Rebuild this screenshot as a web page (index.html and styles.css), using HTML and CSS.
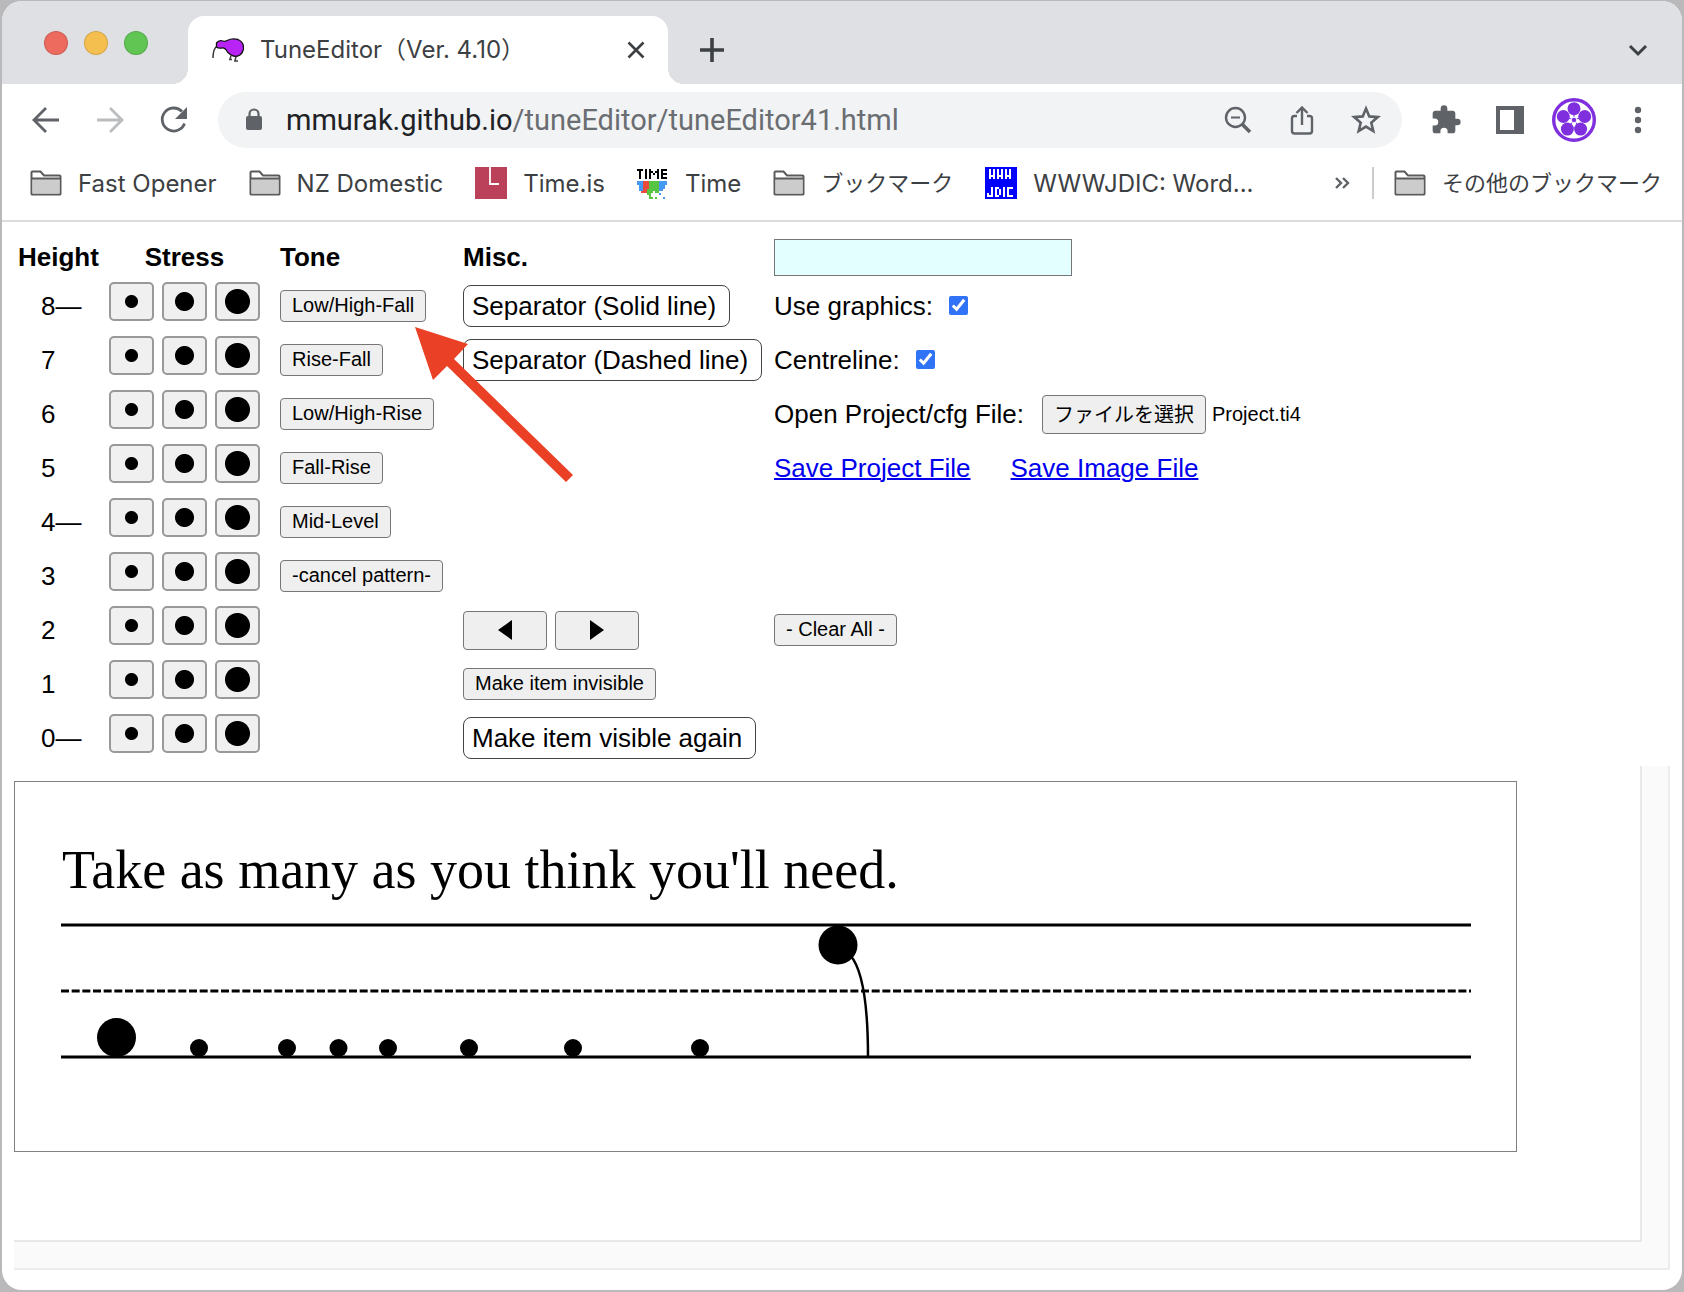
FILE: index.html
```html
<!DOCTYPE html>
<html lang="ja">
<head>
<meta charset="utf-8">
<title>TuneEditor（Ver. 4.10）</title>
<link rel="stylesheet" href="styles.css">
</head>
<body>
<svg width="0" height="0" class="defs" aria-hidden="true">
  <symbol id="folder" viewBox="0 0 32 26"><path d="M1.500 24V2.500Q1.500 1.500 2.500 1.500H10.500L14 5.500H29.500Q30.500 5.500 30.500 6.500V24Q30.500 24.500 29.500 24.500H2.500Q1.500 24.500 1.500 24Z" fill="#fff" stroke="#5a5a5a" stroke-width="2"/><path d="M2.500 9H29.500V23.500H2.500Z" fill="#ccc"/><path d="M2 8.500H30" stroke="#5a5a5a" stroke-width="2"/></symbol>
</svg>
<div class="window">
  <header class="tabstrip">
    <div class="lights"><span class="red"></span><span class="yellow"></span><span class="green"></span></div>
    <div class="tab">
      <svg class="favicon" width="32" height="24" viewBox="0 0 32 24"><path d="M1 20Q1 11 5 8" fill="none" stroke="#333" stroke-width="1.500"/><path d="M4.500 9V5Q7 1.500 11 3Q13 4 15 2.500Q20 0 26 1.500Q32 4 31.500 11Q30 17.500 24 18.500Q19 18 15.500 14Q13 9.500 10 10Q6 10.500 4.500 9Z" fill="#b824f5" stroke="#111" stroke-width="1.300"/><path d="M19 17.500 18 21.500M24 18.500 23 23M17 21.500H20M22 23H26" fill="none" stroke="#444" stroke-width="1.500"/></svg>
      <span class="tab-title">TuneEditor（Ver. 4.10）</span>
      <button class="icon" aria-label="Close tab"><svg width="24" height="24" viewBox="0 0 24 24"><path d="M4.500 4.500 19.500 19.500M19.500 4.500 4.500 19.500" stroke="#3c4043" stroke-width="2.600"/></svg></button>
    </div>
    <button class="icon new-tab" aria-label="New tab"><svg width="24" height="24" viewBox="0 0 24 24"><path d="M12 0V24M0 12H24" stroke="#3c4043" stroke-width="3.600"/></svg></button>
    <button class="icon tab-list" aria-label="Search tabs"><svg width="24" height="24" viewBox="0 0 24 24"><path d="M4 8 12 16 20 8" fill="none" stroke="#3c4043" stroke-width="3"/></svg></button>
  </header>
  <nav class="toolbar">
    <div class="nav-buttons">
      <button class="icon" aria-label="Back"><svg width="32" height="32" viewBox="0 0 32 32"><path d="M29 16H5M16 4 4 16 16 28" fill="none" stroke="#5f6368" stroke-width="2.800"/></svg></button>
      <button class="icon" aria-label="Forward"><svg width="32" height="32" viewBox="0 0 32 32"><path d="M3 16H27M16 4 28 16 16 28" fill="none" stroke="#babcbe" stroke-width="2.800"/></svg></button>
      <button class="icon" aria-label="Reload"><svg width="32" height="32" viewBox="0 0 32 32"><path d="M26.500 19.500A11.500 11.500 0 1 1 24 7.500" fill="none" stroke="#5f6368" stroke-width="2.800"/><path d="M29 3V15H17Z" fill="#5f6368"/></svg></button>
    </div>
    <div class="omnibox">
      <svg width="20" height="24" viewBox="0 0 20 24"><path d="M5.500 9V6A4.500 4.500 0 0 1 14.500 6V9" fill="none" stroke="#5f6368" stroke-width="2.200"/><rect x="2" y="8" width="16" height="14" rx="2" fill="#5f6368"/></svg>
      <div class="url"><span class="host">mmurak.github.io</span>/tuneEditor/tuneEditor41.html</div>
      <button class="icon" aria-label="Zoom"><svg width="32" height="32" viewBox="0 0 32 32"><circle cx="13.500" cy="13.500" r="9.500" fill="none" stroke="#5f6368" stroke-width="2.400"/><path d="M20.500 20.500 28 28" stroke="#5f6368" stroke-width="3.600"/><path d="M9 13.500H18" stroke="#5f6368" stroke-width="2"/></svg></button>
      <button class="icon" aria-label="Share"><svg width="32" height="32" viewBox="0 0 32 32"><path d="M11 12H8.500Q6 12 6 14.500V27Q6 29.500 8.500 29.500H23.500Q26 29.500 26 27V14.500Q26 12 23.500 12H21M16 21V5M10.500 9 16 3.500 21.500 9" fill="none" stroke="#5f6368" stroke-width="2.400"/></svg></button>
      <button class="icon" aria-label="Bookmark"><svg width="32" height="32" viewBox="0 0 32 32"><path d="M16 4.500 19.300 12.400 27.800 13.100 21.300 18.700 23.300 27.100 16 22.600 8.700 27.100 10.700 18.700 4.200 13.100 12.700 12.400Z" fill="none" stroke="#5f6368" stroke-width="2.600"/></svg></button>
    </div>
    <div class="actions">
      <button class="icon" aria-label="Extensions"><svg width="32" height="32" viewBox="0 0 24 24"><path d="M20.500 11H19V7c0-1.100-.9-2-2-2h-4V3.500a2.500 2.500 0 0 0-5 0V5H4c-1.100 0-2 .9-2 2v3.800h1.500a2.700 2.700 0 0 1 0 5.400H2V20c0 1.100.9 2 2 2h3.800v-1.500a2.700 2.700 0 0 1 5.400 0V22H17c1.100 0 2-.9 2-2v-4h1.500a2.500 2.500 0 0 0 0-5z" fill="#5f6368"/></svg></button>
      <button class="icon" aria-label="Side panel"><svg width="32" height="32" viewBox="0 0 32 32"><path d="M2 2H30V30H2ZM6 6V26H20V6Z" fill="#5f6368" fill-rule="evenodd"/></svg></button>
      <button class="icon" aria-label="Profile"><svg class="avatar" width="44" height="44" viewBox="-22 -22 44 44"><circle r="20.300" fill="#fff" stroke="#7f2fdd" stroke-width="3.400"/><g fill="#7f2fdd"><circle cy="-11.300" r="6.500"/><circle cx="10.700" cy="-3.500" r="6.500"/><circle cx="6.600" cy="9.100" r="6.500"/><circle cx="-6.600" cy="9.100" r="6.500"/><circle cx="-10.700" cy="-3.500" r="6.500"/></g><path d="M0 0V-6M0 0 5.500-2M0 0 3.500 5M0 0-3.500 5M0 0-5.500-2" stroke="#7f2fdd"/><circle r="2.800" fill="#7f2fdd" stroke="#fff"/></svg></button>
      <button class="icon" aria-label="Menu"><svg width="32" height="32" viewBox="0 0 32 32" fill="#5f6368"><circle cx="16" cy="6" r="3.200"/><circle cx="16" cy="16" r="3.200"/><circle cx="16" cy="26" r="3.200"/></svg></button>
    </div>
  </nav>
  <nav class="bookmarks">
    <a href="#"><svg width="32" height="26"><use href="#folder"/></svg>Fast Opener</a>
    <a href="#"><svg width="32" height="26"><use href="#folder"/></svg>NZ Domestic</a>
    <a href="#"><svg width="32" height="32" viewBox="0 0 32 32"><path d="M0 0H32V32H0Z" fill="#bb4059"/><path d="M15 0V17H24" fill="none" stroke="#fff" stroke-width="1.800"/></svg>Time.is</a>
    <a href="#"><svg width="32" height="32" viewBox="0 0 16 16" shape-rendering="crispEdges"><path d="M0 1h3v1H2v4H1V2H0zM4 1h1v5H4zM6 1h1v1h1v1h1V2h1V1h1v5h-1V3H9v1H8V3H7v3H6zM12 1h3v1h-2v1h2v1h-2v1h2v1h-3z"/><path d="M0 7h15v2h-1v2h-1v1h-2V7H3v6H2v-1H1V9H0z" fill="#4698f5"/><path d="M3 7h3v6H3zM2 12h2v1H2z" fill="#ea4a3d"/><path d="M6 7h5v6H9v-1H8v1H7v2h1v1H6v-2H5v-3h1zM9 15h1v1H9z" fill="#58c443"/><path d="M11 13h1v1h-1zM13 15h1v1h-1z" fill="#4698f5"/></svg>Time</a>
    <a href="#" class="jp"><svg width="32" height="26"><use href="#folder"/></svg>ブックマーク</a>
    <a href="#"><svg width="32" height="32" viewBox="0 0 16 16" shape-rendering="crispEdges"><path d="M0 0H16V16H0Z" fill="#00f"/><path d="M2 1h1v3h1V1h1v5H4V5H3v1H2zM6 1h1v3h1V1h1v5H8V5H7v1H6zM10 1h1v3h1V1h1v5h-1V5h-1v1h-1zM3 10h1v5H1v-2h1v1h1zM5 10h2v1h1v3H7v1H5zM9 10h1v5H9zM11 10h3v1h-2v3h2v1h-3z" fill="#fff"/><path d="M6 11h1v3H6z" fill="#00f"/></svg>WWWJDIC: Word...</a>
    <button class="icon more" aria-label="More bookmarks"><svg width="16" height="14" viewBox="0 0 16 14"><path d="M2 2 7 7 2 12M9 2 14 7 9 12" fill="none" stroke="#5f6368" stroke-width="2.400"/></svg></button>
    <a href="#" class="jp other"><svg width="32" height="26"><use href="#folder"/></svg>その他のブックマーク</a>
  </nav>
  <main>
    <form class="controls">
      <strong class="first">Height</strong><strong class="center">Stress</strong><strong>Tone</strong><strong>Misc.</strong>
      <div><input type="text" class="entry" aria-label="Sentence"></div>

      <span class="level">8—</span>
      <div class="stress"><button type="button" class="s" aria-label="8 weak"></button><button type="button" class="m" aria-label="8 medium"></button><button type="button" class="l" aria-label="8 strong"></button></div>
      <div><button type="button" class="btn">Low/High-Fall</button></div>
      <div><button type="button" class="big">Separator (Solid line)</button></div>
      <div><label for="graphics">Use graphics:</label><input type="checkbox" id="graphics" checked></div>

      <span class="level">7</span>
      <div class="stress"><button type="button" class="s" aria-label="7 weak"></button><button type="button" class="m" aria-label="7 medium"></button><button type="button" class="l" aria-label="7 strong"></button></div>
      <div><button type="button" class="btn">Rise-Fall</button></div>
      <div><button type="button" class="big">Separator (Dashed line)</button></div>
      <div><label for="centreline">Centreline:</label><input type="checkbox" id="centreline" checked></div>

      <span class="level">6</span>
      <div class="stress"><button type="button" class="s" aria-label="6 weak"></button><button type="button" class="m" aria-label="6 medium"></button><button type="button" class="l" aria-label="6 strong"></button></div>
      <div><button type="button" class="btn">Low/High-Rise</button></div>
      <div></div>
      <div class="file"><label for="project">Open Project/cfg File:</label><input type="file" id="project" hidden><button type="button" class="btn tall">ファイルを選択</button><span class="file-name">Project.ti4</span></div>

      <span class="level">5</span>
      <div class="stress"><button type="button" class="s" aria-label="5 weak"></button><button type="button" class="m" aria-label="5 medium"></button><button type="button" class="l" aria-label="5 strong"></button></div>
      <div><button type="button" class="btn">Fall-Rise</button></div>
      <div></div>
      <div class="links"><a href="#">Save Project File</a><a href="#">Save Image File</a></div>

      <span class="level">4—</span>
      <div class="stress"><button type="button" class="s" aria-label="4 weak"></button><button type="button" class="m" aria-label="4 medium"></button><button type="button" class="l" aria-label="4 strong"></button></div>
      <div><button type="button" class="btn">Mid-Level</button></div>
      <div></div><div></div>

      <span class="level">3</span>
      <div class="stress"><button type="button" class="s" aria-label="3 weak"></button><button type="button" class="m" aria-label="3 medium"></button><button type="button" class="l" aria-label="3 strong"></button></div>
      <div><button type="button" class="btn">-cancel pattern-</button></div>
      <div></div><div></div>

      <span class="level">2</span>
      <div class="stress"><button type="button" class="s" aria-label="2 weak"></button><button type="button" class="m" aria-label="2 medium"></button><button type="button" class="l" aria-label="2 strong"></button></div>
      <div></div>
      <div class="steps"><button type="button" class="btn step" aria-label="Previous"><svg width="14" height="20" viewBox="0 0 14 20"><path d="M14 0V20L0 10Z"/></svg></button><button type="button" class="btn step" aria-label="Next"><svg width="14" height="20" viewBox="0 0 14 20"><path d="M0 0V20L14 10Z"/></svg></button></div>
      <div><button type="button" class="btn">- Clear All -</button></div>

      <span class="level">1</span>
      <div class="stress"><button type="button" class="s" aria-label="1 weak"></button><button type="button" class="m" aria-label="1 medium"></button><button type="button" class="l" aria-label="1 strong"></button></div>
      <div></div>
      <div><button type="button" class="btn">Make item invisible</button></div>
      <div></div>

      <span class="level">0—</span>
      <div class="stress"><button type="button" class="s" aria-label="0 weak"></button><button type="button" class="m" aria-label="0 medium"></button><button type="button" class="l" aria-label="0 strong"></button></div>
      <div></div>
      <div><button type="button" class="big">Make item visible again</button></div>
      <div></div>
    </form>
    <div class="outer">
      <div class="inner">
        <svg class="score" width="1503" height="371" viewBox="14 781 1503 371">
          <rect x="14.500" y="781.500" width="1502" height="370" fill="#fff" stroke="#808080"/>
          <text x="62" y="888" class="sentence">Take as many as you think you'll need.</text>
          <path d="M61 925H1471M61 1057H1471" stroke="#000" stroke-width="3"/>
          <path d="M61 991H1471" stroke="#000" stroke-width="3" stroke-dasharray="8 2.667"/>
          <circle cx="116.500" cy="1037.500" r="19.500"/>
          <circle cx="199" cy="1048" r="9"/><circle cx="287" cy="1048" r="9"/><circle cx="338.500" cy="1048" r="9"/><circle cx="388" cy="1048" r="9"/><circle cx="469" cy="1048" r="9"/><circle cx="573" cy="1048" r="9"/><circle cx="700" cy="1048" r="9"/>
          <circle cx="838" cy="945" r="19.500"/>
          <path d="M850 955Q868 975 868 1057" fill="none" stroke="#000" stroke-width="2.500"/>
        </svg>
      </div>
    </div>
    <svg class="pointer" width="160" height="157" viewBox="414 326 160 157"><path d="M415 327 468 344 454 359 573 475 566 482 447 366 433 380Z" fill="#ea4025"/></svg>
  </main>
</div>
</body>
</html>
```
FILE: styles.css
```css
* { box-sizing: border-box; }
body {
  margin: 0;
  padding: 1px 2px 2px;
  min-height: 100vh;
  display: flex;
  flex-direction: column;
  background: #b9b9bb;
  font-family: "Liberation Sans", "Noto Sans CJK JP", sans-serif;
  color: #000;
}
.defs { position: absolute; }
svg { display: block; flex: none; }
button { font: inherit; color: inherit; padding: 0; }
.icon { border: 0; background: none; display: flex; flex: none; }

.window {
  flex: 1;
  display: flex;
  flex-direction: column;
  border-radius: 20px;
  overflow: hidden;
  background: #fff;
}
.tabstrip {
  display: flex;
  align-items: center;
  height: 83px;
  padding-right: 32px;
  background: #dfe0e4;
  color: #3c4043;
}
.lights { display: flex; gap: 16px; width: 186px; padding-left: 42px; }
.lights span { width: 24px; height: 24px; border-radius: 50%; border: 1px solid #0002; }
.red { background: #ed6a5e; }
.yellow { background: #f5bf4f; }
.green { background: #61c554; }
.tab {
  position: relative;
  display: flex;
  align-items: center;
  align-self: flex-end;
  width: 480px;
  height: 68px;
  padding: 0 20px 0 24px;
  background: #fff;
  border-radius: 16px 16px 0 0;
}
.tab::before, .tab::after {
  content: "";
  position: absolute;
  bottom: 0;
  width: 16px;
  height: 16px;
}
.tab::before { left: -16px; background: radial-gradient(circle at 0 0, #dfe0e4 16px, #fff 16px); }
.tab::after { right: -16px; background: radial-gradient(circle at 100% 0, #dfe0e4 16px, #fff 16px); }
.tab-title { flex: 1; margin-left: 16px; font: 24px Inter, "Noto Sans CJK JP", sans-serif; line-height: 32px; }
.new-tab, .tab-list { padding-top: 14px; }
.new-tab { margin-left: 32px; }
.tab-list { margin-left: auto; }

.toolbar { display: flex; align-items: center; height: 72px; }
.nav-buttons { display: flex; gap: 32px; width: 216px; padding-left: 28px; flex: none; }
.omnibox {
  flex: 1;
  min-width: 0;
  display: flex;
  align-items: center;
  gap: 32px;
  height: 56px;
  padding: 0 20px 0 26px;
  border-radius: 28px;
  background: #f1f3f4;
}
.url { flex: 1; margin-left: -10px; font: 29px Roboto, sans-serif; color: #6a6d71; white-space: nowrap; }
.host { color: #202124; }
.actions { display: flex; align-items: center; gap: 32px; padding: 0 28px; }
.avatar { margin: 0 -6px; }

.bookmarks {
  display: flex;
  align-items: center;
  gap: 32px;
  height: 66px;
  padding: 0 20px 10px 28px;
  border-bottom: 2px solid #dcdcdd;
  font-family: Inter, "Noto Sans CJK JP", sans-serif;
  font-size: 24px;
  white-space: nowrap;
}
.bookmarks a { display: flex; align-items: center; gap: 16px; color: #3c4043; text-decoration: none; }
.bookmarks .jp { font-size: 22px; line-height: 26px; }
.more { margin-left: auto; margin-right: -10px; }
.bookmarks .other { border-left: 2px solid #ccc; padding-left: 20px; height: 32px; }

main { position: relative; flex: 1; display: flex; flex-direction: column; padding: 13px 12px 20px; }
.controls {
  display: grid;
  grid-template-columns: 95px 171px 183px 311px 1fr;
  grid-template-rows: 44px;
  grid-auto-rows: 54px;
  align-items: center;
  margin-bottom: 1px;
  font-size: 26px;
  white-space: nowrap;
}
.controls > div { display: flex; align-items: center; }
.first { padding-left: 4px; }
.center { width: 151px; text-align: center; }
.level { padding-left: 27px; }
.controls .stress { gap: 8px; padding-bottom: 10px; }
.stress button {
  width: 45px;
  height: 39px;
  border: 2px solid #999;
  border-radius: 5px;
  background: #f0f0f0;
}
.stress .s { background: radial-gradient(circle, #000 6px, #f0f0f0 7px); }
.stress .m { background: radial-gradient(circle, #000 9px, #f0f0f0 10px); }
.stress .l { background: radial-gradient(circle, #000 12px, #f0f0f0 13px); }
.btn {
  height: 32px;
  padding: 0 11px 2px;
  border: 1px solid #767676;
  border-radius: 4px;
  background: #efefef;
  font-size: 20px;
}
.tall { height: 39px; }
.step { width: 84px; height: 39px; padding: 0; display: flex; align-items: center; justify-content: center; }
.steps { gap: 8px; }
.big {
  height: 42px;
  padding: 0 13px 0 8px;
  border: 1px solid #444;
  border-radius: 8px;
  background: #fff;
}
.entry { width: 298px; height: 37px; border: 1px solid #767676; background: #e4ffff; font-size: 26px; }
input[type="checkbox"] { width: 19px; height: 19px; margin: 0 0 2px 16px; accent-color: #3173f6; }
.file label { margin-right: 18px; }
.file-name { margin-left: 6px; font-size: 20px; }
.links { gap: 40px; }
.links a { color: #0000ee; text-decoration-thickness: 2px; }

.outer {
  flex: 1;
  display: flex;
  padding: 0 26px 26px 0;
  border: solid #ececec;
  border-width: 0 2px 2px 0;
  background: #fafafa;
}
.inner { flex: 1; min-width: 0; padding: 15px 0 87px; border: solid #e8e8e8; border-width: 0 2px 2px 0; background: #fff; }
.sentence { font: 54px "Liberation Serif", serif; }
.pointer { position: absolute; left: 412px; top: 104px; }
```
